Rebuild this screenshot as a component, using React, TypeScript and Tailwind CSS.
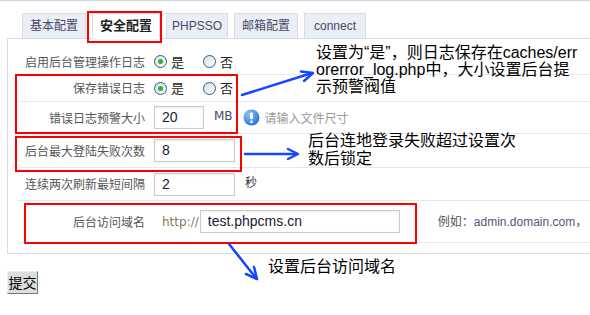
import React from 'react'

const cjk = { fontFamily: '"Noto Sans CJK SC", sans-serif' }
const mixed = { fontFamily: '"Liberation Sans", "Noto Sans CJK SC", sans-serif' }

function Radio({ checked }: { checked?: boolean }) {
  return (
    <span className="inline-flex h-[13px] w-[13px] items-center justify-center rounded-full border border-[#2a5d8c] bg-gradient-to-br from-[#d9dde2] to-[#ffffff]">
      {checked && <span className="h-[5px] w-[5px] rounded-full bg-[#2fb32f]" />}
    </span>
  )
}

function Row({ label, h, children }: { label: string; h: string; children: React.ReactNode }) {
  return (
    <div className={`flex items-center border-b border-[#e6e9ed] ${h}`}>
      <div className="w-[127px] shrink-0 text-right text-[12px] text-[#555]" style={cjk}>
        {label}
      </div>
      <div className="flex shrink-0 items-center whitespace-nowrap pl-[9px]">{children}</div>
    </div>
  )
}

function TextBox({ value, w }: { value: string; w: string }) {
  return (
    <div
      className={`flex h-[23px] items-center border border-[#cbcbcb] bg-white pl-[7px] text-[14px] text-[#1a1a33] shadow-[inset_0_1px_2px_rgba(0,0,0,0.08)] ${w}`}
      style={{ fontFamily: '"Liberation Sans", sans-serif' }}
    >
      {value}
    </div>
  )
}

const tabs = [
  { name: '基本配置', w: 'w-[64px]' },
  { name: '安全配置', w: 'w-[68px]', active: true },
  { name: 'PHPSSO', w: 'w-[62px]' },
  { name: '邮箱配置', w: 'w-[64px]' },
  { name: 'connect', w: 'w-[62px]' },
]

export default function App() {
  return (
    <div className="relative h-[315px] w-[590px] overflow-hidden border-t border-[#cfd6de] bg-white">
      {/* tabs */}
      <div className="flex gap-[6px] pl-[22px] pt-[12px]">
        {tabs.map(t => (
          <div
            key={t.name}
            className={`relative -mb-px flex h-[26px] items-center justify-center border border-[#d6dde6] text-[12px] ${t.w} ${
              t.active ? 'z-10 border-b-white bg-white text-[13px] font-bold text-[#222]' : 'bg-[#eaeef5] text-[#4a4868]'
            }`}
            style={mixed}
          >
            {t.name}
          </div>
        ))}
      </div>

      {/* panel */}
      <div className="ml-[7px] border border-r-0 border-[#d6dde6] pb-[10px] pl-[10px] pt-[10px]">
        <Row label="启用后台管理操作日志" h="h-[26px]">
          <Radio checked />
          <span className="ml-[4px] text-[13px] text-[#222]" style={cjk}>是</span>
          <span className="ml-[19px] flex"><Radio /></span>
          <span className="ml-[4px] text-[13px] text-[#222]" style={cjk}>否</span>
        </Row>
        <Row label="保存错误日志" h="h-[27px]">
          <Radio checked />
          <span className="ml-[4px] text-[13px] text-[#222]" style={cjk}>是</span>
          <span className="ml-[19px] flex"><Radio /></span>
          <span className="ml-[4px] text-[13px] text-[#222]" style={cjk}>否</span>
        </Row>
        <Row label="错误日志预警大小" h="h-[32px]">
          <TextBox value="20" w="w-[50px]" />
          <span className="ml-[10px] -mt-[4px] text-[12px] text-[#4a4868]" style={{ fontFamily: '"DejaVu Sans", sans-serif' }}>MB</span>
          <svg width="17" height="17" viewBox="0 0 17 17" className="ml-[10px]">
            <defs>
              <radialGradient id="ig" cx="0.35" cy="0.3" r="0.8">
                <stop offset="0" stopColor="#8cc4f5" />
                <stop offset="1" stopColor="#1f6fd0" />
              </radialGradient>
            </defs>
            <circle cx="8.5" cy="8.5" r="8" fill="url(#ig)" />
            <rect x="7.2" y="3.5" width="2.6" height="6.8" rx="1" fill="#fff" />
            <circle cx="8.5" cy="12.8" r="1.4" fill="#fff" />
          </svg>
          <span className="ml-[5px] text-[12px] text-[#999]" style={cjk}>请输入文件尺寸</span>
        </Row>
        <Row label="后台最大登陆失败次数" h="h-[34px]">
          <TextBox value="8" w="w-[81px]" />
        </Row>
        <Row label="连续两次刷新最短间隔" h="h-[33px]">
          <TextBox value="2" w="w-[81px]" />
          <span className="ml-[10px] -mt-[4px] text-[12px] text-[#333]" style={cjk}>秒</span>
        </Row>
        <Row label="后台访问域名" h="h-[42px]">
          <span className="ml-[8px] text-[12px] text-[#8a7a5a]" style={{ fontFamily: '"DejaVu Sans", sans-serif' }}>http://</span>
          <span className="ml-[1px]"><TextBox value="test.phpcms.cn" w="w-[200px]" /></span>
          <span className="ml-[38px] text-[12px] text-[#555]" style={mixed}>
            例如：<span className="text-[#55557a]">admin.domain.com，</span>
          </span>
        </Row>
      </div>

      <button
        className="ml-[7px] mt-[17px] flex h-[23px] w-[31px] items-center justify-center whitespace-nowrap border border-b-[#777] border-l-[#eee] border-r-[#777] border-t-[#eee] bg-[#ddd] p-0 text-[14px] text-black"
        style={cjk}
      >
        提交
      </button>

      {/* red highlight boxes */}
      <div className="absolute left-[87px] top-[10px] h-[32px] w-[75px] border-2 border-[#ff0000]" />
      <div className="absolute left-[15px] top-[73px] h-[60px] w-[223px] border-2 border-[#ff0000]" />
      <div className="absolute left-[15px] top-[135px] h-[36px] w-[227px] border-2 border-[#ff0000]" />
      <div className="absolute left-[24px] top-[202px] h-[41px] w-[393px] border-2 border-[#ff0000]" />

      {/* arrows */}
      <svg className="pointer-events-none absolute left-0 top-0" width="590" height="315">
        <g stroke="#1646ff" strokeWidth="2.5" fill="none" strokeLinecap="round" strokeLinejoin="round">
          <path d="M242 94 L312 72" />
          <path d="M301 70.5 L313 72 L304 80" />
          <path d="M245 153 L297 153" />
          <path d="M288 148 L298 153 L288 158" />
          <path d="M229 243 L256 277" />
          <path d="M254 266 L257 278 L246 273" />
        </g>
      </svg>

      {/* annotations */}
      <div className="absolute left-[316px] top-[43px] whitespace-nowrap text-[16px] leading-[17px] text-black" style={mixed}>
        设置为“是”，则日志保存在caches/err
        <br />
        orerror_log.php中，大小设置后台提
        <br />
        示预警阀值
      </div>
      <div className="absolute left-[308px] top-[129px] whitespace-nowrap text-[16px] leading-[18px] text-black" style={cjk}>
        后台连地登录失败超过设置次
        <br />
        数后锁定
      </div>
      <div className="absolute left-[268px] top-[256px] whitespace-nowrap text-[16px] leading-[17px] text-black" style={cjk}>
        设置后台访问域名
      </div>
    </div>
  )
}
